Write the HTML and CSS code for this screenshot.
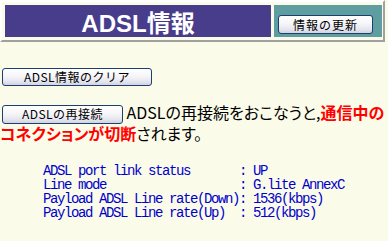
FILE: index.html
```html
<!DOCTYPE html>
<html lang="ja">
<head>
<meta charset="utf-8">
<title>ADSL情報</title>
<link rel="stylesheet" href="styles.css">
</head>
<body>
<div class="header">
  <div class="title">ADSL情報</div>
  <div class="refresh-cell"><button class="btn btn-refresh">情報の更新</button></div>
</div>
<div class="clear-row"><button class="btn btn-clear">ADSL情報のクリア</button></div>
<p class="reconnect"><button class="btn btn-reconnect">ADSLの再接続</button> ADSLの再接続をおこなうと,<span class="warn">通信中のコネクションが切断</span>されます。</p>
<pre class="status">ADSL port link status       : UP
Line mode                   : G.lite AnnexC
Payload ADSL Line rate(Down): 1536(kbps)
Payload ADSL Line rate(Up)  : 512(kbps)</pre>
</body>
</html>
```

FILE: styles.css
```css
html, body {
  margin: 0;
  padding: 0;
}
body {
  background: #fbfbe9;
  font-family: "Noto Sans CJK JP", sans-serif;
  color: #000;
}
.header {
  display: flex;
  gap: 3px;
  width: 377px;
  border: 2px solid;
  border-color: #ffffff #a0a0a0 #a0a0a0 #ffffff;
  padding: 3px 1px 3px 3px;
}
.title {
  width: 266px;
  height: 32px;
  background: #483d8b;
  color: #fff;
  font: bold 24px "Liberation Sans", "Noto Sans CJK JP", sans-serif;
  display: flex;
  align-items: center;
  justify-content: center;
}
.refresh-cell {
  width: 108px;
  box-sizing: border-box;
  background: #5f9ea0;
  display: flex;
  align-items: flex-start;
  padding: 10px 0 0 4px;
}
.btn {
  box-sizing: border-box;
  border: 1px solid #1d3f6f;
  border-radius: 3px;
  background: linear-gradient(#ffffff 0%, #f6f6f9 45%, #e4e4ee 80%, #d2d2e2 100%);
  font: 12px "Noto Sans CJK JP", sans-serif;
  color: #000;
  padding: 0;
  margin: 0;
  line-height: 16px;
}
.btn-refresh {
  width: 95px;
  height: 19px;
  letter-spacing: 1px;
}
.clear-row {
  margin-top: 21px;
  padding-left: 2px;
  height: 18px;
}
.btn-clear {
  width: 150px;
  height: 18px;
  letter-spacing: 0.5px;
}
.reconnect {
  margin: 22px 0 0;
  font-size: 16px;
  line-height: 18px;
  font-feature-settings: "palt";
}
.btn-reconnect {
  width: 121px;
  height: 19px;
  margin-left: 2px;
  letter-spacing: 0.5px;
  font-feature-settings: normal;
}
.warn {
  color: #ff0000;
  font-weight: bold;
}
.status {
  margin: 22px 0 0 43px;
  font: 14px "Liberation Mono", monospace;
  letter-spacing: -1.4px;
  line-height: 14px;
  color: #0000cc;
}
```
